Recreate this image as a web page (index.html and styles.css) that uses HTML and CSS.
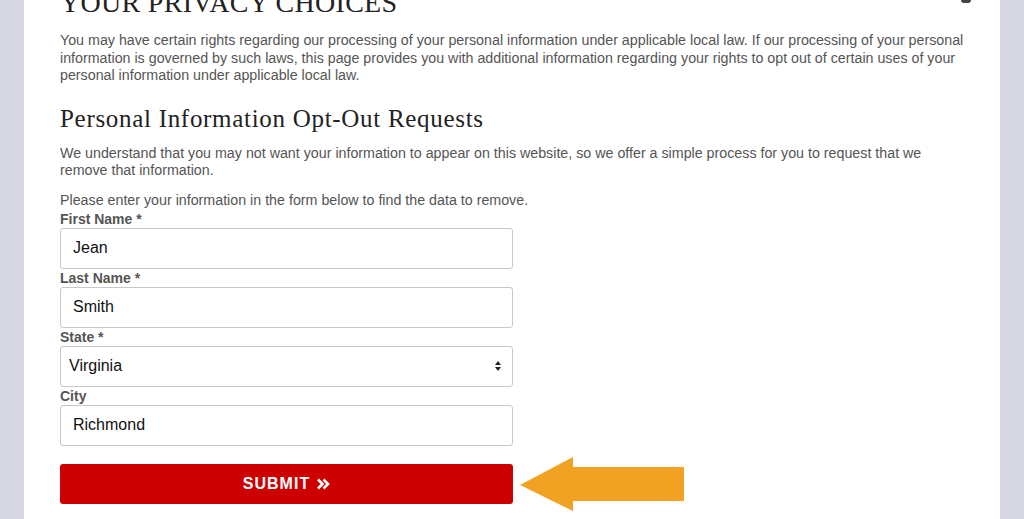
FILE: index.html
```html
<!DOCTYPE html>
<html lang="en">
<head>
<meta charset="utf-8">
<title>Your Privacy Choices</title>
<link rel="stylesheet" href="styles.css">
</head>
<body>
<main class="panel">
  <span class="corner-mark"></span>
  <h1 class="title">YOUR PRIVACY CHOICES</h1>
  <p class="text">You may have certain rights regarding our processing of your personal information under applicable local law. If our processing of your personal information is governed by such laws, this page provides you with additional information regarding your rights to opt out of certain uses of your personal information under applicable local law.</p>
  <h2 class="subtitle">Personal Information Opt-Out Requests</h2>
  <p class="text">We understand that you may not want your information to appear on this website, so we offer a simple process for you to request that we remove that information.</p>
  <p class="text intro">Please enter your information in the form below to find the data to remove.</p>
  <form class="form">
    <label class="label" for="fn">First Name *</label>
    <input class="field" id="fn" type="text" value="Jean">
    <label class="label" for="ln">Last Name *</label>
    <input class="field" id="ln" type="text" value="Smith">
    <label class="label" for="st">State *</label>
    <div class="select" id="st">
      <span class="select-value">Virginia</span>
      <svg class="select-arrows" width="8" height="12" viewBox="0 0 8 12"><path d="M4 1 L7 5 H1 Z M4 11 L7 7 H1 Z" fill="#222"/></svg>
    </div>
    <label class="label" for="ct">City</label>
    <input class="field" id="ct" type="text" value="Richmond">
    <div class="submit-row">
      <button class="submit" type="button">SUBMIT <svg class="chev" width="14" height="12" viewBox="0 0 14 12"><path d="M2 1.5 L6.5 6 L2 10.5 M7.5 1.5 L12 6 L7.5 10.5" fill="none" stroke="#fff" stroke-width="2.6"/></svg></button>
      <svg class="arrow" width="164" height="54" viewBox="0 0 164 54"><path d="M0 28 L53 0 L53 10 L164 10 L164 44 L53 44 L53 54 Z" fill="#f1a223"/></svg>
    </div>
  </form>
</main>
</body>
</html>
```

FILE: styles.css
```css
html, body {
  margin: 0;
  padding: 0;
  height: 100%;
  overflow: hidden;
}
body {
  background: #d8d8e5;
  font-family: "Liberation Sans", Arial, sans-serif;
}
.panel {
  position: relative;
  display: flow-root;
  margin: 0 24px;
  background: #fff;
  min-height: 100%;
  padding: 0 36px;
  box-sizing: border-box;
}
.corner-mark {
  position: absolute;
  left: 937px;
  top: 0;
  width: 10px;
  height: 3px;
  background: #444;
  border-radius: 0 0 5px 5px;
}
.title {
  margin: 0;
  margin-top: -14px;
  font-family: "Liberation Serif", "Times New Roman", serif;
  font-weight: normal;
  font-size: 28px;
  line-height: 34px;
  color: #222;
  letter-spacing: 0.3px;
}
.text {
  margin: 12px 0 0;
  font-size: 14.25px;
  line-height: 17.6px;
  color: #555;
}
.subtitle {
  margin: 19px 0 0;
  font-family: "Liberation Serif", "Times New Roman", serif;
  font-weight: normal;
  font-size: 25px;
  line-height: 30px;
  letter-spacing: 0.7px;
  color: #222;
}
.subtitle + .text {
  margin-top: 11px;
}
.intro {
  margin-top: 12px;
}
.form {
  display: flex;
  flex-direction: column;
  width: 453px;
}
.label {
  font-size: 14px;
  font-weight: bold;
  line-height: 18px;
  color: #555;
}
.field, .select {
  box-sizing: border-box;
  width: 453px;
  height: 41px;
  border: 1px solid #c8c8c8;
  border-radius: 3px;
  background: #fff;
  font-family: "Liberation Sans", Arial, sans-serif;
  font-size: 16px;
  color: #111;
  padding: 0 12px;
  margin: 0;
}
.select {
  display: flex;
  align-items: center;
  justify-content: space-between;
  padding: 0 10px 0 8px;
}
.select-arrows {
  display: block;
}
.submit-row {
  display: flex;
  align-items: center;
  margin-top: 11px;
  gap: 7px;
}
.submit {
  flex: none;
  width: 453px;
  height: 40px;
  border: none;
  border-radius: 3px;
  background: #cc0000;
  color: #fff;
  font-family: "Liberation Sans", Arial, sans-serif;
  font-weight: bold;
  font-size: 16px;
  letter-spacing: 1px;
  display: flex;
  align-items: center;
  justify-content: center;
  gap: 6px;
  padding: 0;
}
.chev {
  display: block;
}
.arrow {
  flex: none;
  display: block;
}
```
